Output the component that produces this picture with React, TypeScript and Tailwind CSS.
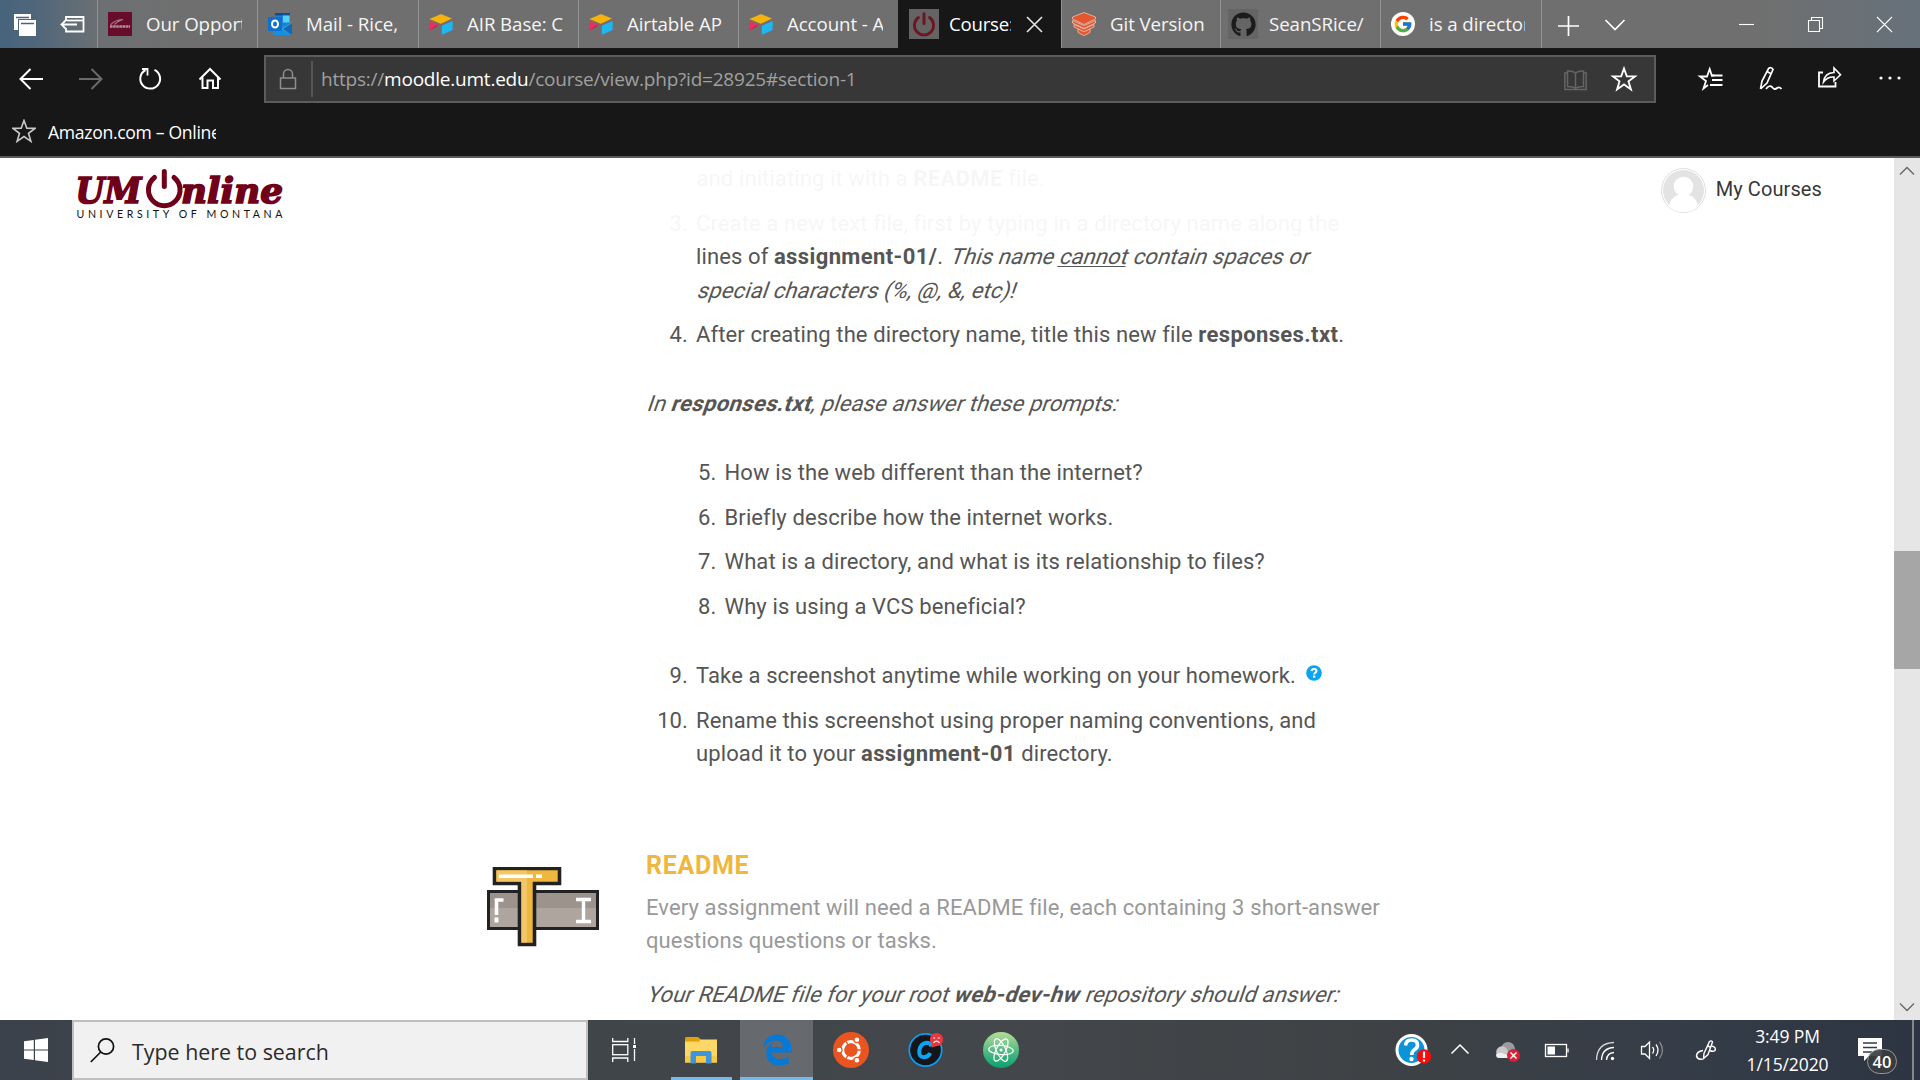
import type { ReactNode } from "react";
import { FaEdgeLegacy, FaGithub } from "react-icons/fa6";
import { FcGoogle } from "react-icons/fc";

const OPEN = "font-['Open_Sans','Noto_Sans',sans-serif]";

/* ---------- tab strip ---------- */

function AirtableIcon() {
  return (
    <svg width="24" height="24" viewBox="0 0 24 24">
      <path d="M0.500 7 L11 2.500 Q12 2 13 2.500 L23 6.500 L12.500 11.500 Q11.800 11.800 11 11.500 Z" fill="#f5b30c" />
      <path d="M0.300 9 L9.600 13 L0.300 19 Z" fill="#ee2f62" />
      <path d="M0.300 19 L6 13.800 L9.600 13 Z" fill="#c01f4c" />
      <path d="M12.800 13.800 L23.600 9 V18 L12.800 22.800 Z" fill="#1fb6f2" />
    </svg>
  );
}

function OutlookIcon() {
  return (
    <svg width="24" height="24" viewBox="0 0 24 24">
      <rect x="7" y="1" width="15" height="14" fill="#1f7fd0" />
      <rect x="7" y="1" width="15" height="2.500" fill="#0c4f9c" />
      <rect x="15" y="3.500" width="6.500" height="7" fill="#50d3f7" />
      <path d="M5 10 L14.500 16 L24 10 V23 H5 Z" fill="#28a8ea" />
      <path d="M5 13 L24 23 H5 Z" fill="#1490df" />
      <path d="M24 11 L15 17 L24 23 Z" fill="#1566b4" />
      <rect x="0" y="5" width="14" height="14" rx="1" fill="#0f6fce" />
      <ellipse cx="7" cy="12" rx="3" ry="3.500" fill="none" stroke="#fff" strokeWidth="2" />
    </svg>
  );
}

function MontanaIcon() {
  return (
    <svg width="24" height="24" viewBox="0 0 24 24">
      <rect width="24" height="24" fill="#670d2b" />
      <path d="M2.500 13 Q6 8 15 7.500 Q9 9.500 6.500 12.500" fill="none" stroke="#a87888" strokeWidth="1.200" />
      <path d="M2 14.500 h20" stroke="#b58a98" strokeWidth="2.600" strokeDasharray="2.600 0.500" />
    </svg>
  );
}

function PowerIcon() {
  return (
    <div className="flex h-[30px] w-[30px] items-center justify-center bg-[#646464]">
      <svg width="24" height="26" viewBox="0 0 24 26" fill="none" stroke="#6d1522" strokeWidth="2.800" strokeLinecap="round">
        <path d="M6.500 6.500 A9.600 9.600 0 1 0 17.500 6.500" />
        <path d="M12 2.800 V12.500" strokeWidth="3" />
      </svg>
    </div>
  );
}

function GitBookIcon() {
  return (
    <svg width="24" height="24" viewBox="0 0 24 24" fill="#e4572e" stroke="#f3c1b0" strokeWidth="0.800">
      <path d="M6 17 L12 19 L18 17 V20.500 L12 23.600 L6 20.500 Z" />
      <path d="M2 12.500 L12 17 L22 12.500 V15 L12 19.800 L2 15 Z" />
      <path d="M0.500 8.500 L12 13.500 L23.500 8.500 V11 L12 16.300 L0.500 11 Z" />
      <path d="M0.500 5 L12 0.500 L23.500 5 V7 L12 12.500 L0.500 7 Z" />
    </svg>
  );
}

type Tab = { label: string; icon: ReactNode; width: string };

const leftTabs: Tab[] = [
  { label: "Our Opportunities", icon: <MontanaIcon />, width: "w-[160px]" },
  { label: "Mail - Rice,", icon: <OutlookIcon />, width: "w-[161px]" },
  { label: "AIR Base: C", icon: <AirtableIcon />, width: "w-[160px]" },
  { label: "Airtable AP", icon: <AirtableIcon />, width: "w-[160px]" },
  { label: "Account - Airtable", icon: <AirtableIcon />, width: "w-[160px]" },
];

const rightTabs: Tab[] = [
  { label: "Git Version", icon: <GitBookIcon />, width: "w-[159px]" },
  {
    label: "SeanSRice/",
    icon: (
      <div className="flex h-[30px] w-[30px] items-center justify-center bg-[#656565]">
        <FaGithub size={25} color="#1c1c1c" />
      </div>
    ),
    width: "w-[160px]",
  },
  {
    label: "is a directory a folder",
    icon: (
      <div className="flex h-6 w-6 items-center justify-center rounded-full bg-white">
        <FcGoogle size={20} />
      </div>
    ),
    width: "w-[161px]",
  },
];

function TabItem({ label, icon, width }: Tab) {
  return (
    <div className={`flex h-12 shrink-0 items-center gap-[11px] border-l border-[#939393] pl-[7px] ${width}`}>
      <div className="flex w-[30px] shrink-0 justify-center">{icon}</div>
      <div className="w-[96px] overflow-hidden whitespace-nowrap text-[18.700px] leading-8 tracking-[-0.080px] text-[#f5f5f5]">
        {label}
      </div>
    </div>
  );
}

function TabStrip() {
  return (
    <div className="flex h-12 items-center bg-[linear-gradient(90deg,#46647c_0,#51677a_40px,#6c7072_100px,#6f6f6f_180px,#6f6f6f_1760px,#66717b_1920px)]">
      <div className="flex w-[97px] shrink-0 items-center">
        <svg width="96" height="48" viewBox="0 0 96 48">
          <rect x="14" y="14" width="17" height="16" fill="#fff" />
          <path d="M16 17.500 h13" stroke="#4a6579" strokeWidth="1.500" />
          <rect x="18.500" y="19.500" width="18" height="17" fill="#fff" stroke="#4e667a" strokeWidth="1" />
          <path d="M21 23.500 h13" stroke="#4a6579" strokeWidth="1.500" />
          <g fill="none" stroke="#fff" strokeWidth="1.800">
            <path d="M66 21 V17 H83.500 V31.500 H66 V28" />
            <path d="M67 20.500 H83" />
            <path d="M77 24.500 H61.500 M66.500 19.500 L61.500 24.500 L66.500 29.500" />
          </g>
        </svg>
      </div>
      {leftTabs.map((t) => (
        <TabItem key={t.label} {...t} />
      ))}
      <div className="flex h-12 w-[163px] shrink-0 items-center bg-[#171717] pl-[11px]">
        <PowerIcon />
        <div className="ml-2.5 w-[62px] overflow-hidden whitespace-nowrap text-[18.600px] leading-8 tracking-[-0.200px] text-white">
          Course: WEB
        </div>
        <svg className="ml-[15px]" width="17" height="17" viewBox="0 0 17 17" stroke="#e6e6e6" strokeWidth="1.600">
          <path d="M1 1 L16 16 M16 1 L1 16" />
        </svg>
      </div>
      {rightTabs.map((t) => (
        <TabItem key={t.label} {...t} />
      ))}
      <div className="flex h-12 grow items-center border-l border-[#939393]">
        <svg width="378" height="48" viewBox="1542 0 378 48" fill="none" stroke="#fff" strokeWidth="1.700">
          <path d="M1558 26 H1579 M1568.500 16 V36" />
          <path d="M1605.500 20 L1615 29.500 L1624.500 20" />
          <g strokeWidth="1.100">
            <path d="M1739 24.500 H1754" />
            <path d="M1808.500 20.500 H1819.500 V31.500 H1808.500 Z M1811.500 20 V17.500 H1822.500 V28.500 H1820" />
            <path d="M1877 17 L1892 32 M1892 17 L1877 32" />
          </g>
        </svg>
      </div>
    </div>
  );
}

/* ---------- toolbar ---------- */

const STAR = "M12 1.500 L14.800 9.200 L23 9.400 L16.500 14.300 L18.900 22.300 L12 17.500 L5.100 22.300 L7.500 14.300 L1 9.400 L9.200 9.200 Z";

function Toolbar() {
  return (
    <div className="flex h-[62px] items-center bg-[#171717]">
      <svg className="shrink-0" width="264" height="62" viewBox="0 48 264 62" fill="none" stroke="#fff" strokeWidth="2">
        <path d="M43 79 H20.500 M30.500 69 L20.500 79 L30.500 89" />
        <path d="M79 79 H101.500 M91.500 69 L101.500 79 L91.500 89" stroke="#6b6b6b" />
        <path d="M154.500 69.800 A9.900 9.900 0 1 1 145.500 70" />
        <path d="M142 69 H147.500 V75.500" strokeWidth="1.800" />
        <path d="M199.500 79.500 L210 69 L220.500 79.500 M202.500 77.500 V88 H207.500 V80.500 H213 V88 H218 V77.500" />
      </svg>
      <div className="flex h-12 w-[1392px] shrink-0 items-center border-2 border-[#5c5c5c] bg-[#373737]">
        <svg width="50" height="44" viewBox="266 56 50 44" fill="none" stroke="#8e8e8e" strokeWidth="1.500">
          <rect x="280.500" y="77" width="15" height="10.500" />
          <path d="M283.500 77 V73 A4.500 4.500 0 0 1 292.500 73 V77" />
          <path d="M312 60 V96" stroke="#626262" />
        </svg>
        <div className="ml-[5px] grow whitespace-nowrap text-[19px] leading-8 tracking-[-0.220px] text-[#a0a0a0]">
          https://<span className="text-white">moodle.umt.edu</span>/course/view.php?id=28925#section-1
        </div>
        <svg width="90" height="44" viewBox="1564 56 90 44" fill="none">
          <g stroke="#656565" strokeWidth="1.500">
            <path d="M1575.500 72 V87 M1575.500 72 Q1573 69.800 1567.500 70 V85.500 Q1573 85.500 1575.500 87.500 Q1578 85.500 1583.500 85.500 V70 Q1578 69.800 1575.500 72" />
            <path d="M1567 72 H1564.800 V88.500 H1586.200 V72 H1584" />
          </g>
          <path d={STAR} transform="translate(1612 66)" stroke="#fff" strokeWidth="1.900" />
        </svg>
      </div>
      <svg className="shrink-0" width="264" height="62" viewBox="1656 48 264 62" fill="none" stroke="#fff" strokeWidth="1.800">
        <path d="M1714 75.500 L1711.800 75.500 L1709.700 69 L1707 76.500 H1700 L1706 81 L1703.500 88.500 L1708 85" />
        <path d="M1711 75.500 L1716 75.500 M1712 80 H1722.500 M1710 85 H1722.500 M1714 75.500 H1722.500" />
        <path d="M1760.500 89 L1762 81 L1768.500 68.500 Q1771.500 66.500 1773 69.500 L1767 83 L1760.500 89 M1767 71.500 L1771.500 74" strokeWidth="1.700" />
        <path d="M1766 89 Q1769.500 84.500 1772 87 Q1774.500 90.500 1777 88 Q1779.500 86.500 1781.500 89" />
        <path d="M1823 72.500 H1819 V86.500 H1835.500 V82" />
        <path d="M1823.500 82 Q1824.500 73 1834 72.500 V68 L1840.500 74.800 L1834 81 V77 Q1827.500 76.500 1823.500 82 Z" strokeWidth="1.600" />
        <g fill="#fff" stroke="none">
          <circle cx="1881" cy="78" r="1.600" />
          <circle cx="1890" cy="78" r="1.600" />
          <circle cx="1899" cy="78" r="1.600" />
        </g>
      </svg>
    </div>
  );
}

function BookmarksBar() {
  return (
    <div className="flex h-12 items-center border-b-2 border-[#5a5a5a] bg-[#171717] pl-3">
      <svg className="-mt-1 shrink-0" width="24" height="24" viewBox="0 0 24 24" fill="none" stroke="#c9c9c9" strokeWidth="1.600">
        <path d={STAR} />
      </svg>
      <div className="-mt-0.5 ml-3 w-[168px] overflow-hidden whitespace-nowrap text-[17.600px] leading-8 tracking-[-0.320px] text-white">
        Amazon.com – Online Shopping
      </div>
    </div>
  );
}

/* ---------- page ---------- */

function Slant({ children }: { children: ReactNode }) {
  return <span className="inline-block origin-[0_24.300px] -skew-x-[19deg] whitespace-pre">{children}</span>;
}

function Strong({ children }: { children: ReactNode }) {
  return <b className="tracking-[0.380px]">{children}</b>;
}

function Item({ n, children }: { n: number; children: ReactNode }) {
  return (
    <li className="flex">
      <span className="-ml-10 w-[42px] shrink-0 text-right">{n}.</span>
      <div className="ml-[8px] whitespace-nowrap">{children}</div>
    </li>
  );
}

function SiteHeader() {
  return (
    <header className="absolute inset-x-0 top-0 flex h-[86px] items-start justify-between bg-white/95">
      <div className="ml-[75px] mt-2.5">
        <svg className="block" width="212" height="54" viewBox="75 168 212 54" fill="#70001a">
          <g className="font-['DejaVu_Serif'] italic" fontSize="36" fontWeight="700" stroke="#70001a" strokeWidth="1.700">
            <text x="75.500" y="202.800" textLength="66" lengthAdjust="spacingAndGlyphs">UM</text>
            <text x="181" y="202.800" textLength="102" lengthAdjust="spacingAndGlyphs">nline</text>
          </g>
          <g fill="none" stroke="#70001a" strokeLinecap="round">
            <path d="M154.500 177.500 A15.800 15.800 0 1 0 174 177.500" strokeWidth="5" />
            <path d="M164.300 171.500 V186.500" strokeWidth="5" />
          </g>
          <text x="76.500" y="218.300" fontSize="10.600" fill="#111" textLength="206" className="font-['Lato',sans-serif]">
            UNIVERSITY OF MONTANA
          </text>
        </svg>
      </div>
      <div className="mr-[72px] mt-2.5 flex items-start gap-[10px]">
        <svg width="45" height="45" viewBox="0 0 45 45">
          <circle cx="22.500" cy="22.500" r="22" fill="#fff" stroke="#dedede" />
          <circle cx="22.500" cy="22.500" r="20.500" fill="#e3e3e3" />
          <circle cx="22.500" cy="18.500" r="9.800" fill="#fff" />
          <path d="M7.500 38.500 Q10 29 17 27 H28 Q35 29 37.500 38.500 Q31 44 22.500 44 Q14 44 7.500 38.500 Z" fill="#fff" />
        </svg>
        <span className="mt-[5px] text-xl leading-8 tracking-[0.100px] text-[#373737]">My Courses</span>
      </div>
    </header>
  );
}

function TextToolIcon() {
  return (
    <svg width="112" height="80" viewBox="0 0 112 80">
      <rect x="1.500" y="24.500" width="109" height="37" fill="#aea59f" stroke="#222" strokeWidth="3" />
      <rect x="3" y="26" width="106" height="15" fill="#9c938d" />
      <path d="M9.500 50.500 V55.500" stroke="#fff" strokeWidth="4" />
      <path d="M9.500 48 V33 H16.500" fill="none" stroke="#fff" strokeWidth="3.600" />
      <path d="M89 32.500 H104 M89 54.500 H104 M96.500 32.500 V54.500" stroke="#fff" strokeWidth="3.400" />
      <path d="M7.500 1.500 H72.500 V16.500 H47.500 V77.500 H32.500 V16.500 H7.500 Z" fill="#efb73e" stroke="#222" strokeWidth="3.600" />
      <path d="M9.500 3.500 H40 V75.500 H34.500 V14.500 H9.500 Z" fill="#f3c766" />
      <path d="M12 9.200 H46 M49 9.200 H55" stroke="#fff" strokeWidth="3.600" />
    </svg>
  );
}

function Page() {
  return (
    <div className="flex h-[862px] bg-white">
      <div className="relative h-full w-[1894px] overflow-hidden font-['Roboto',sans-serif]">
        <main className="pl-[646px] pt-[4px] text-[22px] leading-[33.500px] tracking-[0.110px] text-[#555]">
          <ol className="flex flex-col gap-[11.200px] pl-[40px]">
            <li className="ml-[10.500px]">
              and initiating it with a <Strong>README</Strong> file.
            </li>
            <Item n={3}>
              Create a new text file, first by typing in a directory name along the
              <br />
              lines of <Strong>assignment-01/</Strong>.{" "}
              <Slant>
                This name <u className="decoration-1 underline-offset-2">cannot</u> contain spaces or
              </Slant>
              <br />
              <Slant>special characters (%, @, &amp;, etc)!</Slant>
            </Item>
            <Item n={4}>
              After creating the directory name, title this new file <Strong>responses.txt</Strong>.
            </Item>
          </ol>
          <p className="mt-[35.500px]">
            <Slant>
              In <Strong>responses.txt</Strong>, please answer these prompts:
            </Slant>
          </p>
          <ol className="mt-[35px] flex flex-col gap-[11.200px] pl-[68.500px]">
            <Item n={5}>How is the web different than the internet?</Item>
            <Item n={6}>Briefly describe how the internet works.</Item>
            <Item n={7}>What is a directory, and what is its relationship to files?</Item>
            <Item n={8}>Why is using a VCS beneficial?</Item>
          </ol>
          <ol className="mt-[35.500px] flex flex-col gap-[11.200px] pl-[40px]">
            <Item n={9}>
              <span className="flex">
                Take a screenshot anytime while working on your homework.
                <svg className="ml-[10px] mt-[6px]" width="16" height="16" viewBox="0 0 16 16">
                  <circle cx="8" cy="8" r="7.800" fill="#08a4f4" />
                  <path d="M5.500 6.200 Q5.700 3.900 8 3.900 Q10.500 3.900 10.500 6 Q10.500 7.300 8.900 8 Q8.200 8.400 8.200 9.400" fill="none" stroke="#fff" strokeWidth="2" />
                  <rect x="7" y="10.600" width="2.300" height="2.100" fill="#fff" />
                </svg>
              </span>
            </Item>
            <Item n={10}>
              Rename this screenshot using proper naming conventions, and
              <br />
              upload it to your <Strong>assignment-01</Strong> directory.
            </Item>
          </ol>
          <section className="relative mt-[78.500px]">
            <div className="absolute -left-[159px] top-[18px]">
              <TextToolIcon />
            </div>
            <h2 className="text-[25px] font-bold leading-[34px] tracking-[0.700px] text-[#efb73e]">README</h2>
            <p className="mt-[7.500px] text-[#999]">
              Every assignment will need a README file, each containing 3 short-answer
              <br />
              questions questions or tasks.
            </p>
            <p className="mt-[20px]">
              <Slant>
                Your README file for your root <Strong>web-dev-hw</Strong> repository should answer:
              </Slant>
            </p>
          </section>
        </main>
        <SiteHeader />
      </div>
      <div className="flex h-full w-[26px] flex-col items-center bg-[#e6e6e6]">
        <svg width="26" height="26" viewBox="0 0 26 26" fill="none" stroke="#666" strokeWidth="1.300">
          <path d="M6 16.500 L13 9.500 L20 16.500" />
        </svg>
        <div className="mt-[367px] h-[118px] w-full bg-[#a6a6a6]" />
        <svg className="mt-auto" width="26" height="26" viewBox="0 0 26 26" fill="none" stroke="#666" strokeWidth="1.300">
          <path d="M6 9.500 L13 16.500 L20 9.500" />
        </svg>
      </div>
    </div>
  );
}

/* ---------- taskbar ---------- */

function ExplorerIcon() {
  return (
    <svg width="32" height="28" viewBox="0 0 32 28">
      <path d="M0 1.500 Q0 0 1.500 0 H13 L16 2.500 V5 H0 Z" fill="#e0a008" />
      <path d="M0 4.500 H14 L15.500 2.500 H32 V25.500 H0 Z" fill="#ffd766" />
      <path d="M0 19 H32 V25.500 H0 Z" fill="#fbc93f" />
      <path d="M5.500 26.500 V16 Q5.500 14 7.500 14 H24.500 Q26.500 14 26.500 16 V26.500 H21 V19 H11 V26.500 Z" fill="#3d96dc" />
    </svg>
  );
}

function UbuntuIcon() {
  return (
    <svg width="36" height="36" viewBox="0 0 36 36">
      <circle cx="18" cy="18" r="18" fill="#e95420" />
      <circle cx="18" cy="18" r="8.300" fill="none" stroke="#fff" strokeWidth="3.200" />
      <g stroke="#e95420" strokeWidth="1.300">
        <path d="M18 18 H30 M18 18 L12 7.600 M18 18 L12 28.400" />
      </g>
      <circle cx="18" cy="18" r="6.400" fill="#e95420" />
      <g fill="#fff" stroke="#e95420" strokeWidth="1.200">
        <circle cx="6.200" cy="18" r="2.900" />
        <circle cx="23.900" cy="7.800" r="2.900" />
        <circle cx="23.900" cy="28.200" r="2.900" />
      </g>
    </svg>
  );
}

function CIcon() {
  return (
    <svg width="36" height="36" viewBox="0 0 36 36">
      <circle cx="17.500" cy="18" r="16.200" fill="#141619" stroke="#08a0f5" strokeWidth="1.700" />
      <path d="M23.500 14.500 Q22.800 10.800 18.500 10.800 Q12.500 11.500 11.300 18.800 Q10.600 25.200 16 25.200 Q20.500 25 22.200 21" fill="none" stroke="#0ba5f8" strokeWidth="4" />
      <path d="M29 14 L23.500 15.500 L24 10 Z" fill="#e8383f" />
      <circle cx="28.500" cy="7.500" r="6.600" fill="#e8383f" />
      <g fill="none" stroke="#fff" strokeWidth="1.200">
        <path d="M25.500 10.800 Q28.500 7.500 31.500 10.800" />
        <path d="M25.200 6 h2 M29.800 6 h2" />
      </g>
    </svg>
  );
}

function AtomIcon() {
  return (
    <svg width="36" height="36" viewBox="0 0 36 36">
      <defs>
        <linearGradient id="atomFill" x1="0" y1="0" x2="0" y2="1">
          <stop offset="0" stopColor="#b4df94" />
          <stop offset="0.550" stopColor="#4fb983" />
          <stop offset="1" stopColor="#08a070" />
        </linearGradient>
      </defs>
      <circle cx="18" cy="18" r="18" fill="url(#atomFill)" />
      <g fill="none" stroke="#fff" strokeWidth="1.200">
        <ellipse cx="18" cy="18" rx="12.300" ry="4.600" transform="rotate(5 18 18)" />
        <ellipse cx="18" cy="18" rx="12.300" ry="4.600" transform="rotate(65 18 18)" />
        <ellipse cx="18" cy="18" rx="12.300" ry="4.600" transform="rotate(-62 18 18)" />
      </g>
      <circle cx="18" cy="18" r="1.500" fill="#fff" />
    </svg>
  );
}

function Tray() {
  return (
    <svg className="shrink-0" width="330" height="60" viewBox="1390 1020 330 60" fill="none" stroke="#fff" strokeWidth="1.300">
      <circle cx="1411.500" cy="1050" r="14.500" fill="#0b95d6" strokeWidth="3" />
      <path d="M1405.500 1045.500 Q1406 1040 1411.500 1040 Q1417.500 1040 1417.500 1045 Q1417.500 1048 1414 1050 Q1411.800 1051.500 1411.800 1055" strokeWidth="3.600" />
      <circle cx="1411.500" cy="1059" r="2.200" fill="#fff" stroke="none" />
      <circle cx="1424" cy="1056.500" r="7.200" fill="#fb0a0a" stroke="none" />
      <path d="M1424 1051.500 V1058" strokeWidth="2.200" />
      <path d="M1424 1059.500 V1061.500" strokeWidth="2.200" />
      <path d="M1451.500 1053.500 L1460 1045 L1468.500 1053.500" strokeWidth="1.500" />
      <g stroke="none">
        <circle cx="1508" cy="1049" r="7" fill="#9a9c9f" />
        <circle cx="1502" cy="1052" r="5.800" fill="#c9c9c9" />
        <path d="M1499 1058 Q1496 1058 1496 1054.500 Q1498 1052 1502 1053 L1512 1057 V1058 Z" fill="#efefef" />
        <circle cx="1513.500" cy="1055.500" r="6.500" fill="#d81f35" />
      </g>
      <path d="M1510.500 1052.500 L1516.500 1058.500 M1516.500 1052.500 L1510.500 1058.500" strokeWidth="1.500" />
      <rect x="1545.500" y="1044.500" width="21" height="12" />
      <rect x="1547.500" y="1046.500" width="7.500" height="8" fill="#fff" stroke="none" />
      <path d="M1568 1048.500 V1052.500" />
      <path d="M1596.500 1060 Q1597 1043 1614 1042.500" stroke="#d5d5d5" />
      <path d="M1601.500 1060 Q1602 1048 1614 1047.500 M1606.500 1060 Q1607 1053 1614 1052.500" />
      <circle cx="1612.500" cy="1058.500" r="1.700" fill="#fff" stroke="none" />
      <path d="M1641.500 1046.500 H1645 L1649.500 1042 V1058.500 L1645 1054 H1641.500 Z" />
      <path d="M1652.500 1047 Q1655 1050 1652.500 1053.500 M1656 1044.500 Q1660 1050 1656 1056" />
      <path d="M1659.500 1042 Q1665.500 1050 1659.500 1058.500" stroke="#85898f" />
      <path d="M1703.500 1058.500 L1704 1053.500 L1709.500 1041.500 Q1711.500 1040 1712.500 1042 L1708 1054.500 Z M1707 1045.500 L1711 1047.500" strokeWidth="1.400" />
      <path d="M1703 1050.500 Q1696.500 1051.500 1696.500 1056 Q1697.500 1060 1702.500 1059 M1711.500 1046 Q1716.500 1047 1715 1050.500 Q1713 1052 1710 1050.500" strokeWidth="1.500" />
    </svg>
  );
}

function Taskbar() {
  return (
    <div className="flex h-[60px] items-center bg-[linear-gradient(90deg,#3c424b_0,#404549_600px,#43474b_1000px,#3e4245_1380px,#343c48_1700px,#2d3442_1920px)]">
      <div className="flex w-[72px] shrink-0 items-center justify-center">
        <svg width="24" height="24" viewBox="0 0 24 24" fill="#fff">
          <path d="M0 3.300 L9.800 1.900 V11.400 H0 Z M11 1.700 L24 0 V11.400 H11 Z M0 12.600 H9.800 V22.100 L0 20.700 Z M11 12.600 H24 V24 L11 22.300 Z" />
        </svg>
      </div>
      <div className="flex h-[60px] w-[516px] shrink-0 items-center border-2 border-[#bfbfbf] bg-[#f1f1f1] pl-4">
        <svg width="25" height="25" viewBox="0 0 25 25" fill="none" stroke="#111" strokeWidth="1.700">
          <circle cx="16" cy="8.500" r="7.600" />
          <path d="M10.800 14 L0.800 24" />
        </svg>
        <span className="ml-[17px] mt-[3px] text-[21.400px] leading-8 text-[#2b2b2b]">Type here to search</span>
      </div>
      <svg className="ml-6 shrink-0" width="25" height="24" viewBox="0 0 25 24" fill="none" stroke="#fff" strokeWidth="1.300">
        <path d="M0.700 0 V3.500 H15.800 V0 M0.700 24 V20 H15.800 V24" />
        <rect x="0.700" y="6.700" width="15.100" height="10" />
        <path d="M22.500 0 V6 M22.500 11 V23" />
        <rect x="21" y="7" width="3" height="3" fill="#fff" stroke="none" />
      </svg>
      <div className="ml-[34px] flex h-[60px] w-[61px] shrink-0 items-center justify-center border-b-[3px] border-[#76b9ed] pr-[1px] pt-[4px]">
        <ExplorerIcon />
      </div>
      <div className="ml-2 flex h-[60px] w-[73px] shrink-0 items-center justify-center border-b-[3px] border-[#76b9ed] bg-[#66696d] pt-[3px]">
        <FaEdgeLegacy size={32} color="#0579d8" />
      </div>
      <div className="ml-5 flex w-[186px] shrink-0 items-center justify-between">
        <UbuntuIcon />
        <CIcon />
        <AtomIcon />
      </div>
      <div className="ml-auto flex h-[60px] items-center">
        <Tray />
        <div className="w-[135px] text-center text-[17.500px] leading-[28px] tracking-[-0.100px] text-white">
          <div>3:49 PM</div>
          <div>1/15/2020</div>
        </div>
        <svg className="shrink-0" width="65" height="60" viewBox="1855 1020 65 60">
          <path d="M1858 1038 H1882 V1056 H1869 L1864 1061 V1056 H1858 Z" fill="#fff" />
          <path d="M1863 1043 H1877 M1863 1047.500 H1877 M1863 1052 H1872" stroke="#343b47" strokeWidth="1.500" />
          <rect x="1867.500" y="1049.500" width="29" height="24" rx="12" fill="#3a3c3f" fillOpacity="0.920" stroke="#93969a" />
          <text x="1882" y="1067.500" textAnchor="middle" fontSize="16.500" fontWeight="600" fill="#fff" className="font-['Open_Sans',sans-serif]">
            40
          </text>
          <path d="M1913 1020 V1080" stroke="#82868d" strokeWidth="2" />
        </svg>
      </div>
    </div>
  );
}

export default function App() {
  return (
    <div className={`flex h-[1080px] w-[1920px] flex-col overflow-hidden bg-white ${OPEN}`}>
      <TabStrip />
      <Toolbar />
      <BookmarksBar />
      <Page />
      <Taskbar />
    </div>
  );
}
